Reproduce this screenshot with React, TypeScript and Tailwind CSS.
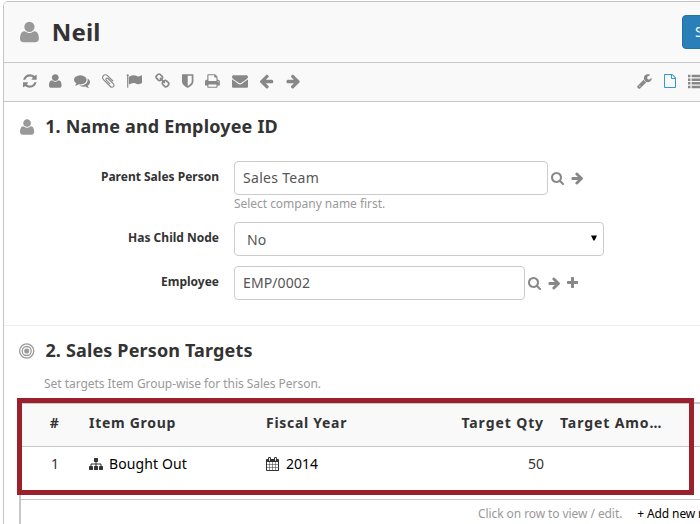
import type { ReactNode } from 'react';

type Glyph = { x: number; w: number; d: string; flip?: boolean };

const glyphs: Record<string, Glyph> = {
  user: { x: 0, w: 1408, flip: true, d: 'M1408 131q0 -120 -73 -189.5t-194 -69.5h-874q-121 0 -194 69.5t-73 189.5q0 53 3.5 103.5t14 109t26.5 108.5t43 97.5t62 81t85.5 53.5t111.5 20q9 0 42 -21.5t74.5 -48t108 -48t133.5 -21.5t133.5 21.5t108 48t74.5 48t42 21.5q61 0 111.5 -20t85.5 -53.5t62 -81t43 -97.5t26.5 -108.5t14 -109t3.5 -103.5zM1088 1024q0 -159 -112.5 -271.5t-271.5 -112.5t-271.5 112.5t-112.5 271.5t112.5 271.5t271.5 112.5t271.5 -112.5t112.5 -271.5z' },
  search: { x: 64, w: 1664, d: 'M1216 832q0-185-131.5-316.5t-316.5-131.5-316.5 131.5-131.5 316.5 131.5 316.5 316.5 131.5 316.5-131.5 131.5-316.5zm512 832q0 52-38 90t-90 38q-54 0-90-38l-343-342q-179 124-399 124-143 0-273.5-55.5t-225-150-150-225-55.5-273.5 55.5-273.5 150-225 225-150 273.5-55.5 273.5 55.5 225 150 150 225 55.5 273.5q0 220-124 399l343 343q37 37 37 90z' },
  refresh: { x: 128, w: 1536, d: 'M1639 1056q0 5-1 7-64 268-268 434.5t-478 166.5q-146 0-282.5-55t-243.5-157l-129 129q-19 19-45 19t-45-19-19-45v-448q0-26 19-45t45-19h448q26 0 45 19t19 45-19 45l-137 137q71 66 161 102t187 36q134 0 250-65t186-179q11-17 53-117 8-23 30-23h192q13 0 22.5 9.5t9.5 22.5zm25-800v448q0 26-19 45t-45 19h-448q-26 0-45-19t-19-45 19-45l138-138q-148-137-349-137-134 0-250 65t-186 179q-11 17-53 117-8 23-30 23h-199q-13 0-22.5-9.5t-9.5-22.5v-7q65-268 270-434.5t480-166.5q146 0 284 55.5t245 156.5l130-129q19-19 45-19t45 19 19 45z' },
  arrowRight: { x: 64, w: 1536, d: 'M1600 960q0 54-37 91l-651 651q-39 37-91 37-51 0-90-37l-75-75q-38-38-38-91t38-91l293-293h-704q-52 0-84.5-37.5t-32.5-90.5v-128q0-53 32.5-90.5t84.5-37.5h704l-293-294q-38-36-38-90t38-90l75-75q38-38 90-38 53 0 91 38l651 651q37 35 37 90z' },
  plus: { x: 192, w: 1408, d: 'M1600 736v192q0 40-28 68t-68 28h-416v416q0 40-28 68t-68 28h-192q-40 0-68-28t-28-68v-416h-416q-40 0-68-28t-28-68v-192q0-40 28-68t68-28h416v-416q0-40 28-68t68-28h192q40 0 68 28t28 68v416h416q40 0 68 28t28 68z' },
  comments: { x: 0, w: 1792, d: 'M1408 768q0 139-94 257t-256.5 186.5-353.5 68.5q-86 0-176-16-124 88-278 128-36 9-86 16h-3q-11 0-20.5-8t-11.5-21q-1-3-1-6.5t.5-6.5 2-6l2.5-5 3.5-5.5 4-5 4.5-5 4-4.5q5-6 23-25t26-29.5 22.5-29 25-38.5 20.5-44q-124-72-195-177t-71-224q0-139 94-257t256.5-186.5 353.5-68.5 353.5 68.5 256.5 186.5 94 257zm384 256q0 120-71 224.5t-195 176.5q10 24 20.5 44t25 38.5 22.5 29 26 29.5 23 25q1 1 4 4.5t4.5 5 4 5 3.5 5.5l2.5 5 2 6 .5 6.5-1 6.5q-3 14-13 22t-22 7q-50-7-86-16-154-40-278-128-90 16-176 16-271 0-472-132 58 4 88 4 161 0 309-45t264-129q125-92 192-212t67-254q0-77-23-152 129 71 204 178t75 230z' },
  paperclip: { x: 192, w: 1408, d: 'M1596 1385q0 117-79 196t-196 79q-135 0-235-100l-777-776q-113-115-113-271 0-159 110-270t269-111q158 0 273 113l605 606q10 10 10 22 0 16-30.5 46.5t-46.5 30.5q-13 0-23-10l-606-607q-79-77-181-77-106 0-179 75t-73 181q0 105 76 181l776 777q63 63 145 63 64 0 106-42t42-106q0-82-63-145l-581-581q-26-24-60-24-29 0-48 19t-19 48q0 32 25 59l410 410q10 10 10 22 0 16-31 47t-47 31q-12 0-22-10l-410-410q-63-61-63-149 0-82 57-139t139-57q88 0 149 63l581 581q100 98 100 235z' },
  flag: { x: 0, w: 1792, d: 'M320 256q0 72-64 110v1266q0 13-9.5 22.5t-22.5 9.5h-64q-13 0-22.5-9.5t-9.5-22.5v-1266q-64-38-64-110 0-53 37.5-90.5t90.5-37.5 90.5 37.5 37.5 90.5zm1472 64v763q0 25-12.5 38.5t-39.5 27.5q-215 116-369 116-61 0-123.5-22t-108.5-48-115.5-48-142.5-22q-192 0-464 146-17 9-33 9-26 0-45-19t-19-45v-742q0-32 31-55 21-14 79-43 236-120 421-120 107 0 200 29t219 88q38 19 88 19 54 0 117.5-21t110-47 88-47 54.5-21q26 0 45 19t19 45z' },
  link: { x: 64, w: 1664, d: 'M1520 1216q0-40-28-68l-208-208q-28-28-68-28-42 0-72 32 3 3 19 18.5t21.5 21.5 15 19 13 25.5 3.5 27.5q0 40-28 68t-68 28q-15 0-27.5-3.5t-25.5-13-19-15-21.5-21.5-18.5-19q-33 31-33 73 0 40 28 68l206 207q27 27 68 27 40 0 68-26l147-146q28-28 28-67zm-703-705q0-40-28-68l-206-207q-28-28-68-28-39 0-68 27l-147 146q-28 28-28 67 0 40 28 68l208 208q27 27 68 27 42 0 72-31-3-3-19-18.5t-21.5-21.5-15-19-13-25.5-3.5-27.5q0-40 28-68t68-28q15 0 27.5 3.5t25.5 13 19 15 21.5 21.5 18.5 19q33-31 33-73zm895 705q0 120-85 203l-147 146q-83 83-203 83-121 0-204-85l-206-207q-83-83-83-203 0-123 88-209l-88-88q-86 88-208 88-120 0-204-84l-208-208q-84-84-84-204t85-203l147-146q83-83 203-83 121 0 204 85l206 207q83 83 83 203 0 123-88 209l88 88q86-88 208-88 120 0 204 84l208 208q84 84 84 204z' },
  shield: { x: 256, w: 1280, d: 'M1344 960v-640h-448v1137q119-63 213-137 235-184 235-360zm192-768v768q0 86-33.5 170.5t-83 150-118 127.5-126.5 103-121 77.5-89.5 49.5-42.5 20q-12 6-26 6t-26-6q-16-7-42.5-20t-89.5-49.5-121-77.5-126.5-103-118-127.5-83-150-33.5-170.5v-768q0-26 19-45t45-19h1152q26 0 45 19t19 45z' },
  print: { x: 64, w: 1664, d: 'M448 1536h896v-256h-896v256zm0-640h896v-384h-160q-40 0-68-28t-28-68v-160h-640v640zm1152 64q0-26-19-45t-45-19-45 19-19 45 19 45 45 19 45-19 19-45zm128 0v416q0 13-9.5 22.5t-22.5 9.5h-224v160q0 40-28 68t-68 28h-960q-40 0-68-28t-28-68v-160h-224q-13 0-22.5-9.5t-9.5-22.5v-416q0-79 56.5-135.5t135.5-56.5h64v-544q0-40 28-68t68-28h672q40 0 88 20t76 48l152 152q28 28 48 76t20 88v256h64q79 0 135.5 56.5t56.5 135.5z' },
  envelope: { x: 0, w: 1792, d: 'M1792 710v794q0 66-47 113t-113 47h-1472q-66 0-113-47t-47-113v-794q44 49 101 87 362 246 497 345 57 42 92.5 65.5t94.5 48 110 24.5h2q51 0 110-24.5t94.5-48 92.5-65.5q170-123 498-345 57-39 100-87zm0-294q0 79-49 151t-122 123q-376 261-468 325-10 7-42.5 31t-54 38.5-52 32.5-57.5 27-50 9h-2q-23 0-50-9t-57.5-27-52-32.5-54-38.5-42.5-31q-91-64-262-182.5t-205-142.5q-62-42-117-115.5t-55-136.5q0-78 41.5-130t118.5-52h1472q65 0 112.5 47t47.5 113z' },
  wrench: { x: 64, w: 1664, d: 'M448 1472q0-26-19-45t-45-19-45 19-19 45 19 45 45 19 45-19 19-45zm644-420l-682 682q-37 37-90 37-52 0-91-37l-106-108q-38-36-38-90 0-53 38-91l681-681q39 98 114.5 173.5t173.5 114.5zm634-435q0 39-23 106-47 134-164.5 217.5t-258.5 83.5q-185 0-316.5-131.5t-131.5-316.5 131.5-316.5 316.5-131.5q58 0 121.5 16.5t107.5 46.5q16 11 16 28t-16 28l-293 169v224l193 107q5-3 79-48.5t135.5-81 70.5-35.5q15 0 23.5 10t8.5 25z' },
  file: { x: 128, w: 1536, d: 'M1596 380q28 28 48 76t20 88v1152q0 40-28 68t-68 28h-1344q-40 0-68-28t-28-68v-1600q0-40 28-68t68-28h896q40 0 88 20t76 48zm-444-244v376h376q-10-29-22-41l-313-313q-12-12-41-22zm384 1528v-1024h-416q-40 0-68-28t-28-68v-416h-768v1536h1280z' },
  list: { x: 0, w: 1792, d: 'M0 192h256v256h-256zM0 576h256v256h-256zM0 960h256v256h-256zM0 1344h256v256h-256zM384 192h1408v256h-1408zM384 576h1408v256h-1408zM384 960h1408v256h-1408zM384 1344h1408v256h-1408z' },
  bullseye: { x: 128, w: 1536, d: 'M896 128a768 768 0 1 1 0 1536a768 768 0 1 1 0-1536zM896 256a640 640 0 1 0 0 1280a640 640 0 1 0 0-1280zM896 384a512 512 0 1 1 0 1024a512 512 0 1 1 0-1024zM896 512a384 384 0 1 0 0 768a384 384 0 1 0 0-768zM896 640a256 256 0 1 1 0 512a256 256 0 1 1 0-512z' },
  sitemap: { x: 0, w: 1792, d: 'M1792 1248v320q0 40-28 68t-68 28h-320q-40 0-68-28t-28-68v-320q0-40 28-68t68-28h96v-192h-512v192h96q40 0 68 28t28 68v320q0 40-28 68t-68 28h-320q-40 0-68-28t-28-68v-320q0-40 28-68t68-28h96v-192h-512v192h96q40 0 68 28t28 68v320q0 40-28 68t-68 28h-320q-40 0-68-28t-28-68v-320q0-40 28-68t68-28h96v-192q0-52 38-90t90-38h512v-192h-96q-40 0-68-28t-28-68v-320q0-40 28-68t68-28h320q40 0 68 28t28 68v320q0 40-28 68t-68 28h-96v192h512q52 0 90 38t38 90v192h96q40 0 68 28t28 68z' },
  calendar: { x: 64, w: 1664, d: 'M192 1664h288v-288h-288v288zm352 0h320v-288h-320v288zm-352-352h288v-320h-288v320zm352 0h320v-320h-320v320zm-352-384h288v-288h-288v288zm736 736h320v-288h-320v288zm-384-736h320v-288h-320v288zm768 736h288v-288h-288v288zm-384-352h320v-320h-320v320zm-352-864v-288q0-13-9.5-22.5t-22.5-9.5h-64q-13 0-22.5 9.5t-9.5 22.5v288q0 13 9.5 22.5t22.5 9.5h64q13 0 22.5-9.5t9.5-22.5zm736 864h288v-320h-288v320zm-384-384h320v-288h-320v288zm384 0h288v-288h-288v288zm32-480v-288q0-13-9.5-22.5t-22.5-9.5h-64q-13 0-22.5 9.5t-9.5 22.5v288q0 13 9.5 22.5t22.5 9.5h64q13 0 22.5-9.5t9.5-22.5zm384-64v1280q0 52-38 90t-90 38h-1408q-52 0-90-38t-38-90v-1280q0-52 38-90t90-38h128v-96q0-66 47-113t113-47h64q66 0 113 47t47 113v96h384v-96q0-66 47-113t113-47h64q66 0 113 47t47 113v96h128q52 0 90 38t38 90z' },
};

function Icon({ name, size = 16, className = '' }: { name: string; size?: number; className?: string }) {
  const g = glyphs[name];
  return (
    <svg
      width={(g.w / 1792) * size}
      height={size}
      viewBox={`${g.x} 0 ${g.w} 1792`}
      className={`shrink-0 overflow-visible fill-current ${className}`}
      aria-hidden="true"
    >
      <path d={g.d} transform={g.flip ? 'translate(0 1536) scale(1 -1)' : undefined} />
    </svg>
  );
}

function Field({ label, children, className = '' }: { label: string; children: ReactNode; className?: string }) {
  return (
    <div className={`flex ${className}`}>
      <div className="w-[215px] shrink-0 pt-[7px] text-right text-[12px] leading-[17px] font-bold text-[#333]">{label}</div>
      <div className="ml-[15px] flex h-[34px] items-center text-[#888]">{children}</div>
    </div>
  );
}

const box = 'flex h-[34px] items-center rounded-[4px] border border-[#ccc] bg-white text-[14px] text-[#555]';
const tools = ['refresh', 'user', 'comments', 'paperclip', 'flag', 'link', 'shield', 'print', 'envelope'];

export default function App() {
  return (
    <div className="relative h-[524px] w-[700px] overflow-hidden bg-white pt-px pl-[3px] font-['Noto_Sans',sans-serif] text-[14px] text-[#333]">
      <div className="h-[540px] w-[740px] rounded-[5px] border border-[#c4c4c4]">
        <header className="flex h-[61px] items-center rounded-t-[4px] border-b border-[#c7c7c7] bg-[#f9f9f9] pl-4">
          <Icon name="user" size={24} className="text-[#999]" />
          <h1 className="ml-[13px] text-[24px] font-bold tracking-[0.1px]">Neil</h1>
          <button className="mr-[-10px] ml-auto h-[34px] w-[70px] rounded-[4px] border border-[#2472a4] bg-[#2980b9] pb-[2px] pl-3 text-left text-[14px] text-white">
            Save
          </button>
        </header>

        <nav className="flex h-[39px] items-center gap-[12.15px] border-b border-[#c7c7c7] bg-[#f9f9f9] pb-[2px] pl-[19px] text-[#888]">
          {tools.map((t) => (
            <Icon key={t} name={t} />
          ))}
          <Icon name="arrowRight" className="-scale-x-100" />
          <Icon name="arrowRight" />
          <div className="mr-[37px] ml-auto flex items-center gap-3">
            <Icon name="wrench" />
            <Icon name="file" size={14} className="text-[#3498db]" />
            <Icon name="list" size={17} />
          </div>
        </nav>

        <section className="h-[224px] border-b border-[#eee] pt-3">
          <div className="flex h-[25px] items-center pl-4">
            <Icon name="user" size={18} className="text-[#999]" />
            <h2 className="ml-[11px] text-[18px] font-bold tracking-[0.17px]">1. Name and Employee ID</h2>
          </div>
          <Field label="Parent Sales Person" className="mt-[22px]">
            <div className={`w-[314px] px-2 pb-[2px] tracking-[0.3px] ${box}`}>Sales Team</div>
            <Icon name="search" size={14} className="ml-[3px]" />
            <Icon name="arrowRight" size={14} className="ml-[7px]" />
          </Field>
          <p className="ml-[230px] h-[17px] text-[12px] leading-[17px] tracking-[-0.04px] text-[#999]">Select company name first.</p>
          <Field label="Has Child Node" className="mt-[10px]">
            <div className={`w-[370px] justify-between pr-[6px] pl-3 ${box}`}>
              No
              <svg width="6" height="6" viewBox="0 0 7 6" className="mb-[2px] fill-black" aria-hidden="true">
                <path d="M0 0h7L4.2 6H2.8z" />
              </svg>
            </div>
          </Field>
          <Field label="Employee" className="mt-[10px]">
            <div className={`w-[291px] px-2 pb-[2px] tracking-[0.1px] ${box}`}>EMP/0002</div>
            <Icon name="search" size={14} className="ml-[3px]" />
            <Icon name="arrowRight" size={14} className="ml-[7px]" />
            <Icon name="plus" size={14} className="ml-[7px]" />
          </Field>
        </section>

        <section className="pt-3">
          <div className="flex h-[25px] items-center pl-[15px]">
            <Icon name="bullseye" size={18} className="text-[#999]" />
            <h2 className="ml-[11px] text-[18px] font-bold tracking-[0.15px]">2. Sales Person Targets</h2>
          </div>
          <p className="mt-[12px] ml-10 h-[17px] text-[12px] leading-[17px] tracking-[-0.04px] text-[#999]">
            Set targets Item Group-wise for this Sales Person.
          </p>
          <div className="mt-[10px] ml-[15px] h-[140px] w-[720px] border-2 border-[#c7c7c7]">
            <div className="flex h-[43px] items-center border-b border-[#c7c7c7] bg-[#f9f9f9] pb-[5px] font-bold tracking-[0.7px]">
              <div className="w-[67px] text-center">#</div>
              <div className="ml-px w-[177px]">Item Group</div>
              <div className="w-[148px]">Fiscal Year</div>
              <div className="w-[130px] text-right tracking-[0.9px]">Target Qty</div>
              <div className="ml-4 w-[106px] truncate tracking-[0.9px]">Target Amount</div>
            </div>
            <div className="flex h-[53px] items-start border-b border-[#c7c7c7] pt-[7px] leading-[20px]">
              <div className="w-[68px] text-center">1</div>
              <div className="flex w-[177px] items-center gap-[6px]">
                <Icon name="sitemap" size={14} />
                <span className="tracking-[0.1px] text-black">Bought Out</span>
              </div>
              <div className="flex w-[148px] items-center gap-[7px]">
                <Icon name="calendar" size={14} />
                <span className="text-black">2014</span>
              </div>
              <div className="w-[130px] text-right">50</div>
            </div>
            <div className="flex pt-[5px] pl-[457px] text-[12px] leading-[17px] whitespace-nowrap">
              <span className="tracking-[-0.08px] text-[#999]">Click on row to view / edit.</span>
              <span className="ml-[15px] tracking-[-0.12px] text-black">+ Add new row</span>
            </div>
          </div>
        </section>
      </div>
      <div className="absolute top-[398px] left-[17px] h-[97px] w-[677px] border-[5px] border-[#9c1f2c]" />
    </div>
  );
}
